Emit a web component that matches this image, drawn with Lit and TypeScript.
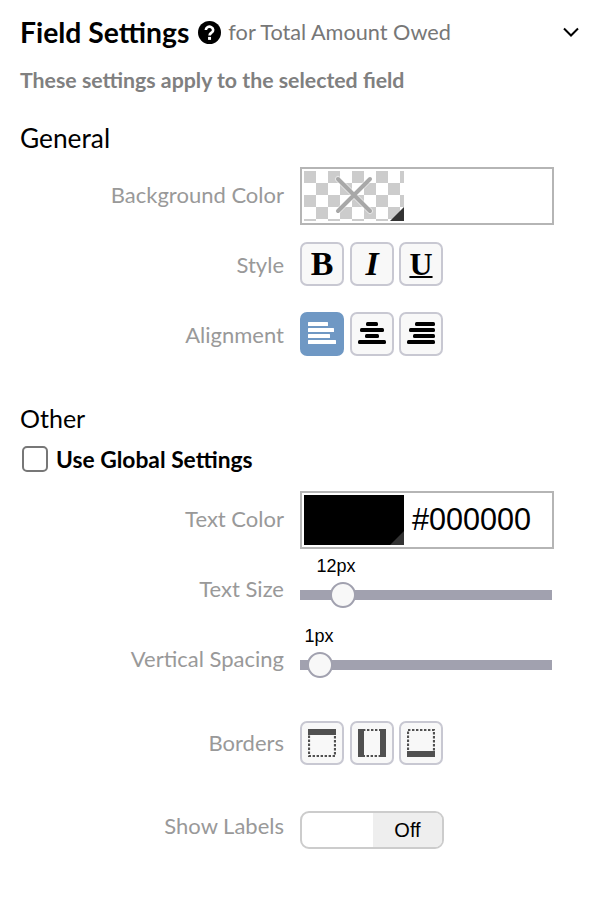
import { LitElement, html, css, svg } from "lit";
import { customElement } from "lit/decorators.js";

const bars = (rows: [number, number][], fill: string, r: number) => svg`<svg class="ico" viewBox="0 0 28 28" width="28" height="28">
  ${rows.map(([x, w], i) => svg`<rect x=${x} y=${2 + i * 6} width=${w} height="4" fill=${fill} rx=${r}/>`)}
</svg>`;

const borderIcon = (sides: string[]) => svg`<svg class="ico" viewBox="0 0 28 28" width="28" height="28">
  <rect x="1" y="1" width="26" height="26" fill="none" stroke="#505050" stroke-width="2.2" stroke-dasharray="2.4 1.6"/>
  ${sides.map((s) =>
    s === "t" ? svg`<rect x="0" y="0" width="28" height="6" fill="#505050"/>`
    : s === "b" ? svg`<rect x="0" y="22" width="28" height="6" fill="#505050"/>`
    : s === "l" ? svg`<rect x="0" y="0" width="6" height="28" fill="#505050"/>`
    : svg`<rect x="22" y="0" width="6" height="28" fill="#505050"/>`)}
</svg>`;

@customElement("app-root")
export class AppRoot extends LitElement {
  static styles = css`
    :host { display: block; width: 596px; height: 900px; background: #fff; overflow: hidden;
      font-family: Lato, "Liberation Sans", sans-serif; color: #000; }
    .panel { padding: 16px 25px 0 20px; display: flex; flex-direction: column; }
    .head { display: flex; align-items: center; height: 32px; }
    .title { font-size: 28.3px; font-weight: 700; }
    .help { margin-left: 9px; width: 23px; height: 23px; }
    .for { margin-left: 7px; font-size: 21.7px; color: #777; }
    .chev { margin-left: auto; width: 18px; height: 12px; margin-right: -9px; }
    .sub { margin-top: 20px; font-size: 21.3px; font-weight: 700; color: #808080; line-height: 24px; }
    h2 { margin: 0; font-size: 25px; font-weight: 400; line-height: 30px; }
    .general { margin-top: 31px; font-size: 26.3px; }
    .first { margin-top: 14px; }
    .row { display: flex; align-items: center; gap: 16px; }
    .lab { width: 264px; flex: none; text-align: right; font-size: 22px; color: #999; }
    .first .lab, .color .lab { padding-bottom: 4px; }
    .box { width: 254px; height: 58px; box-sizing: border-box; border: 2px solid #b5b5b5; padding: 2px;
      display: flex; align-items: center; gap: 8px; font-family: "Liberation Sans", sans-serif; font-size: 30.6px; }
    .hex { margin-bottom: 2px; }
    .swatch { position: relative; width: 100px; height: 50px; flex: none; overflow: hidden; }
    .checker { background-color: #fff;
      background-image: conic-gradient(#ccc 25%, transparent 0 50%, #ccc 0 75%, transparent 0);
      background-size: 24px 24px; background-position: 12px 0; }
    .black { background: #000; }
    .corner { position: absolute; right: 0; bottom: 0; width: 14px; height: 14px; }
    .x { position: absolute; left: 30px; top: 4px; width: 40px; height: 40px; }
    .btns { display: flex; gap: 6px; }
    .btn { width: 44px; height: 44px; box-sizing: border-box; border: 2px solid #c8c8d2; border-radius: 7px;
      background: #f8f8f8; display: flex; align-items: center; justify-content: center;
      font-family: "Liberation Serif", serif; font-size: 34px; line-height: 1; padding: 0; color: #000; }
    .btn + .btn:last-child { margin-left: -1px; }
    .btn.on { background: #6f98c4; border-color: #6f98c4; }
    .b { font-weight: 700; }
    .i { font-weight: 700; font-style: italic; }
    .u { font-weight: 700; text-decoration: underline; text-decoration-thickness: 2px; text-underline-offset: 1px; font-size: 32px; }
    .style { margin-top: 17px; }
    .align { margin-top: 26px; }
    .other { margin-top: 47px; }
    .check { display: flex; align-items: center; margin: 12px 0 0 2px; height: 28px; gap: 8px; font-size: 22.8px; font-weight: 700; }
    .cb { width: 26px; height: 26px; box-sizing: border-box; border: 2px solid #777; border-radius: 5px; flex: none; }
    .color { margin-top: 18px; }
    .srow { height: 70px; }
    .srow .lab { padding-bottom: 2px; margin-top: 10px; }
    .slider { position: relative; width: 252px; height: 70px; font-family: "Liberation Sans", sans-serif; font-size: 18px; }
    .track { position: absolute; left: 0; right: 0; top: 41px; height: 10px; background: #a1a1af; }
    .thumb { position: absolute; top: 33px; width: 26px; height: 26px; box-sizing: border-box; margin-left: -13px;
      border-radius: 50%; border: 2px solid #a1a1af; background: #f8f8f8; }
    .val { position: absolute; top: 7px; transform: translateX(-50%); line-height: 20px; }
    .borders { margin-top: 32px; }
    .borders .lab { padding-bottom: 2px; }
    .labels { margin-top: 46px; }
    .labels .lab { padding-bottom: 10px; }
    .toggle { width: 144px; height: 38px; box-sizing: border-box; border: 2px solid #ccc; border-radius: 9px;
      display: flex; justify-content: flex-end; overflow: hidden; font-family: "Liberation Sans", sans-serif; font-size: 20px; }
    .toggle span { width: 69px; background: #eee; display: flex; align-items: center; justify-content: center; }
  `;

  private slider(label: string, val: string, x: number, vx: number) {
    return html`<div class="row srow"><div class="lab">${label}</div>
      <div class="slider"><div class="track"></div>
        <div class="thumb" style="left:${x}px"></div>
        <div class="val" style="left:${vx}px">${val}</div></div></div>`;
  }

  render() {
    return html`<div class="panel">
      <div class="head">
        <span class="title">Field Settings</span>
        <svg class="help" viewBox="0 0 24 24"><circle cx="12" cy="12" r="12" fill="#000"/>
          <path d="M8.2 9.4a3.8 3.4 0 1 1 5.9 2.8c-1.3.9-2 1.4-2 2.9" fill="none" stroke="#fff" stroke-width="2.8"/>
          <rect x="10.5" y="16.6" width="3.1" height="3.1" fill="#fff"/></svg>
        <span class="for">for Total Amount Owed</span>
        <svg class="chev" viewBox="0 0 18 12"><path d="M2 2.5l7 7 7-7" fill="none" stroke="#000" stroke-width="2"/></svg>
      </div>
      <div class="sub">These settings apply to the selected field</div>
      <h2 class="general">General</h2>
      <div class="row first"><div class="lab">Background Color</div>
        <div class="box"><div class="swatch checker">
          <svg class="x" viewBox="0 0 40 40"><path d="M4 4l32 32M36 4L4 36" stroke="#fff" stroke-opacity=".5" stroke-width="6" stroke-linecap="round"/><path d="M4 4l32 32M36 4L4 36" stroke="#a8a8a8" stroke-width="4" stroke-linecap="round"/></svg>
          <svg class="corner" viewBox="0 0 14 14"><path d="M14 0V14H0Z" fill="#333"/></svg>
        </div></div></div>
      <div class="row style"><div class="lab">Style</div><div class="btns">
        <button class="btn b">B</button><button class="btn i">I</button><button class="btn u">U</button></div></div>
      <div class="row align"><div class="lab">Alignment</div><div class="btns">
        <div class="btn on">${bars([[0, 20], [0, 26], [0, 22], [0, 28]], "#fff", 0.5)}</div>
        <div class="btn">${bars([[8, 12], [2, 24], [7, 14], [0, 28]], "#000", 1.5)}</div>
        <div class="btn">${bars([[8, 20], [2, 26], [6, 22], [0, 28]], "#000", 1.5)}</div></div></div>
      <h2 class="other">Other</h2>
      <div class="check"><div class="cb"></div>Use Global Settings</div>
      <div class="row color"><div class="lab">Text Color</div>
        <div class="box"><div class="swatch black"><svg class="corner" viewBox="0 0 14 14"><path d="M14 0V14H0Z" fill="#333"/></svg></div><span class="hex">#000000</span></div></div>
      ${this.slider("Text Size", "12px", 43, 36)}
      ${this.slider("Vertical Spacing", "1px", 20, 19)}
      <div class="row borders"><div class="lab">Borders</div><div class="btns">
        <div class="btn">${borderIcon(["t"])}</div>
        <div class="btn">${borderIcon(["l", "r"])}</div>
        <div class="btn">${borderIcon(["b"])}</div></div></div>
      <div class="row labels"><div class="lab">Show Labels</div><div class="toggle"><span>Off</span></div></div>
    </div>`;
  }
}
